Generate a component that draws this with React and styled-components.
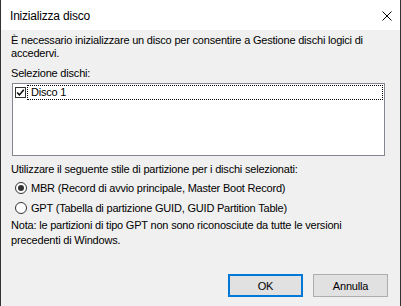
import React from 'react';
import styled, {createGlobalStyle} from 'styled-components';

const GlobalStyle = createGlobalStyle`
  html, body {
    margin: 0;
    padding: 0;
    background: #f0f0f0;
  }
  body {
    font-family: "Liberation Sans", Arial, sans-serif;
    font-size: 11px;
    letter-spacing: -0.2px;
    color: #000;
  }
`;

const Window = styled.div`
  width: 401px;
  height: 306px;
  box-sizing: border-box;
  border-left: 1px solid #333;
  border-right: 1px solid #333;
  background: #f0f0f0;
  display: flex;
  flex-direction: column;
  overflow: hidden;
`;

const TitleBar = styled.div`
  height: 30px;
  flex: none;
  background: #fff;
  display: flex;
  align-items: center;
  justify-content: space-between;
  padding: 0 8px 0 9px;
`;

const Title = styled.span`
  font-size: 12px;
  line-height: 16px;
  letter-spacing: -0.2px;
  padding-top: 1px;
`;

const CloseButton = styled.svg`
  width: 10px;
  height: 10px;
  margin-top: 2px;
`;

const Body = styled.div`
  flex: 1;
  display: flex;
  flex-direction: column;
  padding: 4px 15px 0 10px;
`;

const Text = styled.p`
  margin: ${({mt}) => mt || 0}px 0 0 0;
  line-height: ${({lh}) => lh || 13}px;
`;

const ListBox = styled.div`
  margin: 3px 0 0 1px;
  height: 73px;
  box-sizing: border-box;
  border: 1px solid #828790;
  background: #fff;
  padding: 1px 1px 0 2px;
`;

const ListItem = styled.label`
  display: flex;
  align-items: center;
  height: 15px;
`;

const CheckBox = styled.span`
  width: 11px;
  height: 11px;
  box-sizing: border-box;
  border: 1px solid #333;
  background: #fff;
  display: flex;
  align-items: center;
  justify-content: center;
  flex: none;
`;

const ItemText = styled.span`
  flex: 1;
  margin-left: 1px;
  padding-left: 3px;
  height: 15px;
  box-sizing: border-box;
  line-height: 13px;
  border: 1px dotted #000;
`;

const RadioGroup = styled.div`
  display: flex;
  flex-direction: column;
  gap: 8px;
  margin: 6px 0 0 4px;
`;

const RadioRow = styled.label`
  display: flex;
  align-items: center;
  height: 12px;
  line-height: 13px;
`;

const RadioCircle = styled.span`
  width: 12px;
  height: 12px;
  box-sizing: border-box;
  border-radius: 50%;
  border: 1px solid #333;
  background: #fff;
  display: flex;
  align-items: center;
  justify-content: center;
  flex: none;
  margin-right: 4px;
  &::after {
    content: '';
    width: 6px;
    height: 6px;
    border-radius: 50%;
    background: ${({checked}) => (checked ? '#333' : 'transparent')};
  }
`;

const ButtonRow = styled.div`
  margin: auto -3px 9px 0;
  display: flex;
  justify-content: flex-end;
  gap: 10px;
`;

const Button = styled.button`
  width: 75px;
  height: 23px;
  box-sizing: border-box;
  background: #e1e1e1;
  border: ${({primary}) => (primary ? '2px solid #0078d7' : '1px solid #adadad')};
  font-family: inherit;
  font-size: 11px;
  letter-spacing: -0.2px;
  color: #000;
  padding: 0;
`;

export default function App() {
  return (
    <>
      <GlobalStyle />
      <Window>
        <TitleBar>
          <Title>Inizializza disco</Title>
          <CloseButton viewBox="0 0 10 10">
            <path d="M0.5 0.5 L9.5 9.5 M9.5 0.5 L0.5 9.5" stroke="#000" strokeWidth="1" fill="none" />
          </CloseButton>
        </TitleBar>
        <Body>
          <Text>È necessario inizializzare un disco per consentire a Gestione dischi logici di accedervi.</Text>
          <Text mt={7}>Selezione dischi:</Text>
          <ListBox>
            <ListItem>
              <CheckBox>
                <svg width="9" height="9" viewBox="0 0 9 9">
                  <path d="M1.2 4.6 L3.4 6.9 L7.8 1.8" stroke="#000" strokeWidth="1.5" fill="none" />
                </svg>
              </CheckBox>
              <ItemText>Disco 1</ItemText>
            </ListItem>
          </ListBox>
          <Text mt={7}>Utilizzare il seguente stile di partizione per i dischi selezionati:</Text>
          <RadioGroup>
            <RadioRow>
              <RadioCircle checked />
              MBR (Record di avvio principale, Master Boot Record)
            </RadioRow>
            <RadioRow>
              <RadioCircle />
              GPT (Tabella di partizione GUID, GUID Partition Table)
            </RadioRow>
          </RadioGroup>
          <Text mt={4} lh={15}>Nota: le partizioni di tipo GPT non sono riconosciute da tutte le versioni precedenti di Windows.</Text>
          <ButtonRow>
            <Button primary>OK</Button>
            <Button>Annulla</Button>
          </ButtonRow>
        </Body>
      </Window>
    </>
  );
}
